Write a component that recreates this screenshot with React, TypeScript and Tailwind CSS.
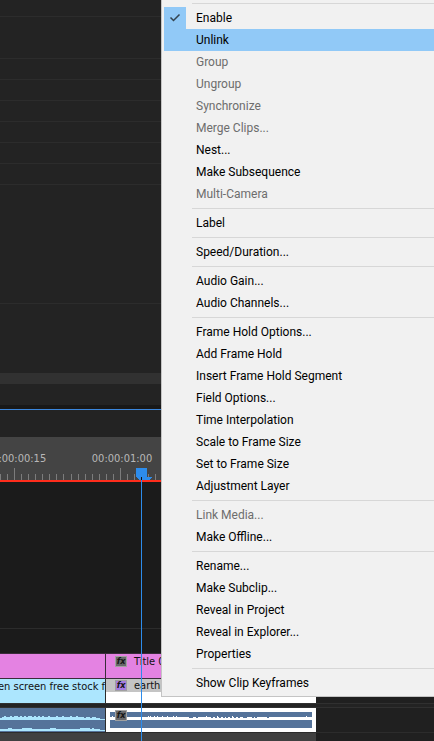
import React from "react";

type Entry = { label: string; disabled?: boolean; active?: boolean; checked?: boolean };

const groups: Entry[][] = [
  [
    { label: "Enable", checked: true },
    { label: "Unlink", active: true },
    { label: "Group", disabled: true },
    { label: "Ungroup", disabled: true },
    { label: "Synchronize", disabled: true },
    { label: "Merge Clips...", disabled: true },
    { label: "Nest..." },
    { label: "Make Subsequence" },
    { label: "Multi-Camera", disabled: true },
  ],
  [{ label: "Label" }],
  [{ label: "Speed/Duration..." }],
  [{ label: "Audio Gain..." }, { label: "Audio Channels..." }],
  [
    { label: "Frame Hold Options..." },
    { label: "Add Frame Hold" },
    { label: "Insert Frame Hold Segment" },
    { label: "Field Options..." },
    { label: "Time Interpolation" },
    { label: "Scale to Frame Size" },
    { label: "Set to Frame Size" },
    { label: "Adjustment Layer" },
  ],
  [{ label: "Link Media...", disabled: true }, { label: "Make Offline..." }],
  [
    { label: "Rename..." },
    { label: "Make Subclip..." },
    { label: "Reveal in Project" },
    { label: "Reveal in Explorer..." },
    { label: "Properties" },
  ],
  [{ label: "Show Clip Keyframes" }],
];

function ContextMenu() {
  return (
    <div
      role="menu"
      className="absolute top-0 right-0 left-[161px] border-b border-l border-[#c4c4c4] bg-[#f1f1f1] pb-0.5 pl-0.5 font-[Roboto,sans-serif] text-xs text-black"
    >
      {groups.map((group, i) => (
        <div key={i}>
          <div className="flex h-[7px] items-center pl-7">
            <div role="separator" className="h-px w-full bg-[#d7d7d7]" />
          </div>
          {group.map((e) => (
            <button
              key={e.label}
              role="menuitem"
              disabled={e.disabled}
              className={`flex h-[22px] w-full items-center gap-2.5 text-left whitespace-nowrap ${
                e.active ? "bg-[#91c9f7]" : ""
              } ${e.disabled ? "text-[#6d6d6d]" : ""}`}
            >
              <span
                className={`flex size-[22px] shrink-0 items-center justify-center ${e.checked ? "bg-[#91c9f7]" : ""}`}
              >
                {e.checked && (
                  <svg viewBox="0 0 22 22" className="size-[22px]" fill="none" stroke="#33434f" strokeWidth="1.5">
                    <path d="M6.5 10.5 L9.5 13.5 L15.5 7.5" />
                  </svg>
                )}
              </span>
              {e.label}
            </button>
          ))}
        </div>
      ))}
    </div>
  );
}

const trackRows = ["h-[17px]", "h-[42px]", "h-[21px]", "h-[21px]", "h-[21px]", "h-[21px]", "h-[21px]", "h-[21px]", "h-[119px]"];

function EffectsPanel() {
  return (
    <section className="bg-[#232323]">
      {trackRows.map((h, i) => (
        <div key={i} className={`${h} border-b border-[#2c2c2c]`} />
      ))}
      <div className="h-[69px]" />
      <div className="h-[11px] bg-[#313131]" />
      <div className="h-[21px]" />
      <div className="h-1 bg-[#181818]" />
    </section>
  );
}

const FRAME = 106 / 15;
const ticks = Array.from({ length: 70 }, (_, k) => ({ x: Math.round(14 + (k - 2) * FRAME), major: (k - 2) % 15 === 0 }));

function Ruler() {
  return (
    <div className="border-b-2 border-[#ff2d1c] bg-[#444444]">
      <div className="flex h-[31px] items-end overflow-hidden pb-px font-['DejaVu_Sans_Condensed','DejaVu_Sans',sans-serif] text-[11px] leading-4 text-[#b8b8b8]">
        <span className="-ml-[37px] w-[106px] shrink-0 text-center">00:00:00:15</span>
        <span className="w-[106px] shrink-0 text-center">00:00:01:00</span>
      </div>
      <svg className="block h-3 w-full" fill="#7c7c7c" shapeRendering="crispEdges">
        {ticks.map((t) => (
          <rect key={t.x} x={t.x} y={t.major ? 0 : 6} width="1" height={t.major ? 12 : 6} />
        ))}
      </svg>
    </div>
  );
}

function Fx({ tone }: { tone: string }) {
  return (
    <span
      className={`flex h-[11px] w-3 shrink-0 items-center justify-center border font-['DejaVu_Sans_Condensed',sans-serif] text-[9px] leading-none font-bold text-[#151515] italic ${tone}`}
    >
      fx
    </span>
  );
}

const bumps = [1, 2, 3, 2, 2, 3, 2, 3, 3, 2, 3, 2, 3, 2, 3, 3, 2, 3, 2, 3, 2, 3, 2, 2, 3, 2, 2, 2, 3, 2, 2, 3, 2, 2, 2, 3, 2, 2, 3, 2, 2, 2, 1, 2, 2, 1, 2, 2, 1, 1, 0, 0, 0];

function StereoWave() {
  return (
    <svg viewBox="0 0 105 24" className="block h-6 w-[105px] shrink-0 bg-[#55739a]" fill="#ace6fe" shapeRendering="crispEdges">
      <rect x="0" y="11" width="105" height="1" />
      <rect x="0" y="22" width="105" height="1" />
      {bumps.map((b, i) => (
        <g key={i}>
          <rect x={i * 2} y={11 - b} width="2" height={b} />
          <rect x={i * 2} y={22 - (bumps[(i * 7 + 30) % 50] > 2 ? 2 : 1)} width="2" height={i > 49 ? 0 : 2} />
        </g>
      ))}
    </svg>
  );
}

const notches = [112, 115, 148, 150, 154, 157, 162, 167, 173, 176, 206, 217, 232, 306];
const drops = [189, 191, 196, 211, 215, 219, 223, 226, 230, 234, 238, 243, 245, 252, 255, 267];

function SelectedWave() {
  return (
    <svg viewBox="106 708 210 24" className="block h-6 w-[210px] bg-white" fill="#55739a" shapeRendering="crispEdges">
      <rect x="110" y="712" width="202" height="5" />
      <rect x="110" y="720" width="202" height="8" />
      {notches.map((x) => (
        <rect key={x} x={x} y="716" width="1" height="1" fill="#ffffff" />
      ))}
      {drops.map((x) => (
        <rect key={x} x={x} y="717" width="2" height="1" />
      ))}
    </svg>
  );
}

function Tracks() {
  return (
    <div className="font-['DejaVu_Sans_Condensed','DejaVu_Sans',sans-serif] text-[11px] leading-3 text-[#111111]">
      <div className="h-[146px] bg-[#1b1b1b]" />
      <div className="h-[25px] border-t border-[#2c2c2c] bg-[#1b1b1b]" />
      <div className="flex h-[26px] border-y border-[#3a2c3a] bg-[#202020] whitespace-nowrap">
        <div className="w-[106px] shrink-0 border-r border-[#3a2c3a] bg-[#e482e2]" />
        <div className="flex w-[210px] shrink-0 items-start gap-[7px] bg-[#e482e2] pt-0.5 pl-[9px]">
          <Fx tone="bg-[#68686a] border-[#a0a0a0]" />
          <span>Title 01</span>
        </div>
      </div>
      <div className="flex h-6 bg-[#202020] whitespace-nowrap">
        <div className="flex w-[106px] shrink-0 justify-end overflow-hidden border-r border-[#2c2c2c] bg-[#ace6fe] pt-0.5">
          green screen free stock f
        </div>
        <div className="w-[210px] shrink-0 bg-white">
          <div className="flex h-[13px] items-start gap-[7px] bg-[#c4c4c4] pt-px pl-[9px]">
            <Fx tone="bg-[#a57ce0] border-[#a0a0a0]" />
            <span>earth</span>
          </div>
        </div>
      </div>
      <div className="h-[5px] border-y border-[#303030] bg-[#232323]" />
      <div className="flex h-6 bg-[#202020]">
        <div className="flex w-[106px] shrink-0 border-r border-[#2c2c2c]">
          <StereoWave />
        </div>
        <div className="relative">
          <SelectedWave />
          <div className="absolute top-0.5 left-[9px]">
            <Fx tone="bg-[#68686a] border-[#a0a0a0]" />
          </div>
        </div>
      </div>
      <div className="h-[9px] border-t border-[#2c2c2c] bg-[#202020]">
        <div className="h-full w-[316px] bg-[#404040]" />
      </div>
    </div>
  );
}

function Playhead() {
  return (
    <svg viewBox="0 0 17 273" className="absolute bottom-0 left-[136px] h-[273px] w-[17px]" fill="#2d8ceb" shapeRendering="crispEdges">
      <path d="M0 0H11V9H16V10H15V11H14V12H3V11H2V10H1V9H0Z" />
      <rect x="5" y="12" width="1" height="261" />
      <rect x="5" y="9" width="1" height="3" fill="#101010" />
    </svg>
  );
}

export default function App() {
  return (
    <main className="relative overflow-hidden bg-[#232323]">
      <EffectsPanel />
      <section className="relative border-t border-[#3a86dc]">
        <div className="h-[27px] bg-[#232323]" />
        <Ruler />
        <Tracks />
        <Playhead />
      </section>
      <ContextMenu />
    </main>
  );
}
